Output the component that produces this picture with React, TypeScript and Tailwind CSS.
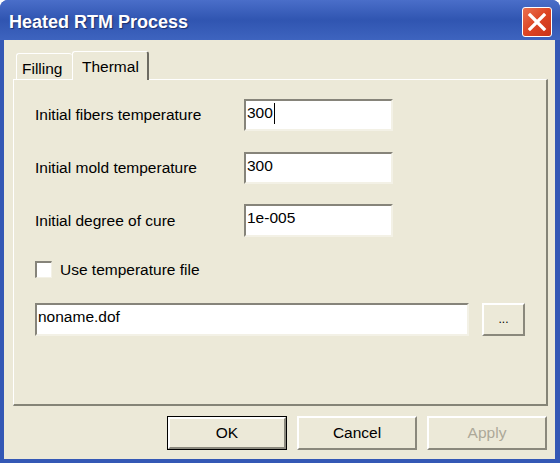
import React from "react";

const font = { fontFamily: '"Liberation Sans", Arial, sans-serif' };

function Field({ value, caret, className }: { value: string; caret?: boolean; className: string }) {
  return (
    <div
      className={`flex items-start bg-white border-t-2 border-l-2 border-t-[#86847a] border-l-[#86847a] border-r-2 border-b-2 border-r-[#f3f1e6] border-b-[#f3f1e6] pl-[1px] pt-[3px] text-[15.5px] leading-[18px] text-black ${className}`}
    >
      <span>{value}</span>
      {caret && <span className="ml-[1px] mt-[-1px] h-[21px] w-[1px] bg-black" />}
    </div>
  );
}

function Btn({ children, def, disabled, className }: { children: React.ReactNode; def?: boolean; disabled?: boolean; className: string }) {
  const inner = (
    <div className="flex h-full w-full items-center justify-center border-t-2 border-l-2 border-t-white border-l-white border-r-2 border-b-2 border-r-[#8a887c] border-b-[#8a887c] bg-[#ece9d8]">
      <span className={disabled ? "text-[#aca899]" : "text-black"}>{children}</span>
    </div>
  );
  return (
    <div className={`${def ? "border border-black" : ""} text-[15.5px] ${className}`}>{inner}</div>
  );
}

export default function App() {
  return (
    <div className="flex h-[463px] w-[560px] flex-col overflow-hidden rounded-t-[8px] bg-[#3458b5]" style={font}>
      {/* Title bar */}
      <div className="flex h-[40px] shrink-0 items-center justify-between bg-gradient-to-b from-[#4a6ec9] via-[#3055b1] to-[#3e64bf] pl-[9px] pr-[8px] pt-[4px]">
        <span className="text-[18px] font-bold text-white [text-shadow:1px_1px_1px_#1c2f6e]">Heated RTM Process</span>
        <div className="flex h-[30px] w-[30px] items-center justify-center rounded-[3px] border border-white bg-gradient-to-br from-[#e9704f] via-[#dd4423] to-[#c9341a]">
          <svg width="20" height="20" viewBox="0 0 20 20">
            <path d="M3 3 L17 17 M17 3 L3 17" stroke="white" strokeWidth="3.2" strokeLinecap="square" />
          </svg>
        </div>
      </div>

      {/* Body */}
      <div className="flex flex-1 flex-col border-l-4 border-r-[5px] border-b-4 border-[#3458b5] bg-[#ece9d8] pt-[11px] pl-[9px] pr-[7px]">
        {/* Tabs */}
        <div className="flex h-[28px] items-end pl-[3px]">
          <div className="flex h-[26px] w-[56px] items-start rounded-t-[3px] border-t border-l border-white pl-[5px] pt-[3px] text-[15.5px] text-black">
            Filling
          </div>
          <div className="relative z-10 mb-[-1px] flex h-[29px] w-[77px] items-start rounded-t-[3px] border-t border-l border-white border-r-2 border-r-[#6d6b62] bg-[#ece9d8] pl-[9px] pt-[3px] text-[15.5px] text-black">
            Thermal
          </div>
        </div>

        {/* Panel */}
        <div className="flex h-[327px] flex-col border-t border-l border-white border-r-2 border-b-2 border-r-[#858477] border-b-[#858477] pl-[21px]">
          <div className="mt-[19px] flex items-center">
            <span className="w-[209px] text-[15.5px] text-black">Initial fibers temperature</span>
            <Field value="300" caret className="h-[32px] w-[149px]" />
          </div>
          <div className="mt-[21px] flex items-center">
            <span className="w-[209px] text-[15.5px] text-black">Initial mold temperature</span>
            <Field value="300" className="h-[32px] w-[149px]" />
          </div>
          <div className="mt-[20px] flex items-center">
            <span className="w-[209px] text-[15.5px] text-black">Initial degree of cure</span>
            <Field value="1e-005" className="h-[33px] w-[149px]" />
          </div>
          <div className="mt-[21px] flex items-center">
            <div className="h-[17px] w-[17px] border-t-2 border-l-2 border-t-[#86847a] border-l-[#86847a] border-r border-b border-r-[#f3f1e6] border-b-[#f3f1e6] bg-white" />
            <span className="ml-[8px] text-[15.5px] text-black">Use temperature file</span>
          </div>
          <div className="mt-[22px] flex items-center">
            <Field value="noname.dof" className="h-[33px] w-[434px]" />
            <Btn className="ml-[13px] h-[33px] w-[43px]">
              <span className="relative top-[-2px] text-[12px]">...</span>
            </Btn>
          </div>
        </div>

        {/* Buttons */}
        <div className="mt-[10px] flex justify-end gap-[10px] pr-[1px]">
          <Btn def className="h-[34px] w-[120px]">OK</Btn>
          <Btn className="h-[34px] w-[120px]">Cancel</Btn>
          <Btn disabled className="h-[34px] w-[120px]">Apply</Btn>
        </div>
      </div>
    </div>
  );
}
